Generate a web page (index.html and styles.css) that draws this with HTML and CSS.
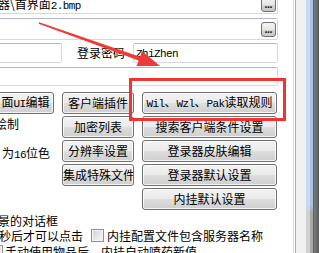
FILE: index.html
```html
<!DOCTYPE html>
<html lang="zh">
<head>
<meta charset="utf-8">
<title>设置</title>
<link rel="stylesheet" href="styles.css">
</head>
<body>
<div class="page">
  <div class="content">
    <div class="row r1">
      <div class="field"><span class="val">器\首界面<span class="lat">2.bmp</span></span><span class="dots">...</span></div>
    </div>
    <div class="row r2">
      <div class="field"><span class="val"></span><span class="dots">...</span></div>
    </div>
    <div class="row r3">
      <div class="field f3a"></div>
      <span class="label">登录密码</span>
      <div class="field f3b"><span class="lat pw">ZhiZhen</span></div>
    </div>
    <div class="row r4">
      <div class="field"></div>
    </div>
    <div class="grid">
      <button class="btn">面<span class="lat">UI</span>编辑</button>
      <button class="btn">客户端插件</button>
      <button class="btn"><span class="lat">Wil</span>、<span class="lat">Wzl</span>、<span class="lat">Pak</span>读取规则</button>
      <span class="txt t1">绘制</span>
      <button class="btn">加密列表</button>
      <button class="btn">搜索客户端条件设置</button>
      <span class="txt t2">为<span class="lat">16</span>位色</span>
      <button class="btn">分辨率设置</button>
      <button class="btn">登录器皮肤编辑</button>
      <span></span>
      <button class="btn">集成特殊文件</button>
      <button class="btn">登录器默认设置</button>
      <span></span>
      <span></span>
      <button class="btn">内挂默认设置</button>
    </div>
    <div class="notes">
      <div class="n1">景的对话框</div>
      <div class="n2"><span>秒后才可以点击</span><span class="chk c1"></span><span class="ct">内挂配置文件包含服务器名称</span></div>
      <div class="n3"><span class="chk"></span><span class="ct2">手动使用物品后，内挂自动喷药新值</span></div>
    </div>
  </div>
  <div class="side">
    <div class="s1"></div><div class="s2"></div><div class="s3"></div><div class="s4"></div><div class="s5"></div><div class="s6"></div><div class="s7"></div><div class="s8"></div>
  </div>
  <div class="mark"></div>
  <svg class="arrow" width="319" height="253" viewBox="0 0 319 253">
    <polygon points="39.3,22.2 140,56.7 142,51.1 160,66 136.6,66.1 138.6,60.5 38.7,23.8" fill="#f03a3a"/>
  </svg>
</div>
</body>
</html>
```
FILE: styles.css
```css
html, body {
  margin: 0;
  padding: 0;
}
body {
  width: 319px;
  height: 253px;
  overflow: hidden;
  background: #fff;
  color: #000;
  font: 12px/14px "Noto Sans CJK SC", sans-serif;
}
.page {
  position: relative;
  display: flex;
  width: 319px;
  height: 253px;
  overflow: hidden;
}
.content {
  width: 293px;
  flex: none;
}
.lat {
  font-family: "Liberation Mono", monospace;
  font-size: 11px;
  letter-spacing: -0.6px;
}
.row {
  display: flex;
  margin-left: -10px;
  width: 288px;
}
.field {
  box-sizing: border-box;
  border: 1px solid #d5d8dd;
  border-top-color: #b4b8be;
  border-radius: 2px;
  background: #fff;
  display: flex;
  align-items: center;
  justify-content: space-between;
  flex: 1;
}
.r1 {
  margin-top: -8px;
  height: 22px;
}
.r1 .field {
  padding: 3px 1px 0 7px;
}
.r2 {
  margin-top: 4px;
  height: 22px;
}
.r2 .field {
  padding-right: 1px;
}
.dots {
  box-sizing: border-box;
  width: 15px;
  height: 15px;
  border: 1px solid #707070;
  border-radius: 3px;
  background: linear-gradient(#f4f4f4, #e6e6e6 50%, #d6d6d6 51%, #c8c8c8);
  font: bold 9px/14px "DejaVu Sans", sans-serif;
  letter-spacing: -1px;
  text-align: center;
  color: #222;
  padding-right: 1px;
}
.r3 {
  margin-top: 3px;
  height: 20px;
  align-items: center;
}
.f3a {
  flex: none;
  width: 72px;
  height: 20px;
}
.label {
  margin-left: 15px;
  width: 48px;
  white-space: nowrap;
}
.f3b {
  margin-left: 8px;
  height: 20px;
  padding-left: 2px;
  justify-content: flex-start;
}
.pw {
  padding-top: 1px;
}
.r4 {
  margin-top: 4px;
  height: 19px;
}
.grid {
  display: grid;
  grid-template-columns: 57px 72px 135px;
  grid-auto-rows: 22px;
  column-gap: 8px;
  row-gap: 2px;
  margin: 6px 0 0 -3px;
}
.btn {
  box-sizing: border-box;
  margin: 0;
  padding: 0;
  font: inherit;
  color: #000;
  white-space: nowrap;
  border: 1px solid #707070;
  border-radius: 3px;
  background: linear-gradient(#f3f3f3, #ebebeb 48%, #dddddd 52%, #cfcfcf);
  box-shadow: inset 0 0 0 1px rgba(255, 255, 255, 0.75);
  overflow: hidden;
}
.txt {
  white-space: nowrap;
}
.t1 {
  align-self: start;
  margin-top: 1px;
  margin-left: -2px;
}
.t2 {
  align-self: end;
  margin-left: 5px;
}
.notes {
  margin-top: 4px;
  white-space: nowrap;
  line-height: 13px;
}
.n1 {
  height: 13px;
  margin-left: -2px;
}
.n2 {
  display: flex;
  align-items: center;
  height: 14px;
  margin-top: 1px;
  margin-left: -1px;
}
.chk {
  flex: none;
  box-sizing: border-box;
  width: 13px;
  height: 13px;
  border: 1px solid #8e8f8f;
  background: linear-gradient(135deg, #cfd2d6, #f8f8f8);
  box-shadow: inset 0 0 0 1px #f4f4f4;
}
.c1 {
  margin-left: 8px;
}
.ct {
  margin-left: 3px;
}
.n3 {
  display: flex;
  align-items: center;
  height: 14px;
  margin-top: 2px;
  margin-left: -10px;
}
.ct2 {
  margin-left: 2px;
}
.side {
  flex: 1;
  display: flex;
}
.s1 { width: 1px; background: #d8d8d8; }
.s2 { width: 1px; background: #fff; }
.s3 { width: 1px; background: #adadad; }
.s4 { width: 10px; background: #f0f0f0; }
.s5 { width: 4px; background: linear-gradient(#c8daf0 0, #c8daf0 205px, #d2d2d2 212px); }
.s6 { width: 3px; background: linear-gradient(#a8c2e3 0, #a8c2e3 205px, #a9a9a9 212px); }
.s7 { width: 1px; background: #59626d; }
.s8 { flex: 1; background: linear-gradient(to right, #7c7c7c, #5a5a5a); }
.mark {
  position: absolute;
  left: 129px;
  top: 78px;
  width: 157px;
  height: 43px;
  box-sizing: border-box;
  border: 3px solid #f03434;
}
.arrow {
  position: absolute;
  left: 0;
  top: 0;
  pointer-events: none;
}
```
